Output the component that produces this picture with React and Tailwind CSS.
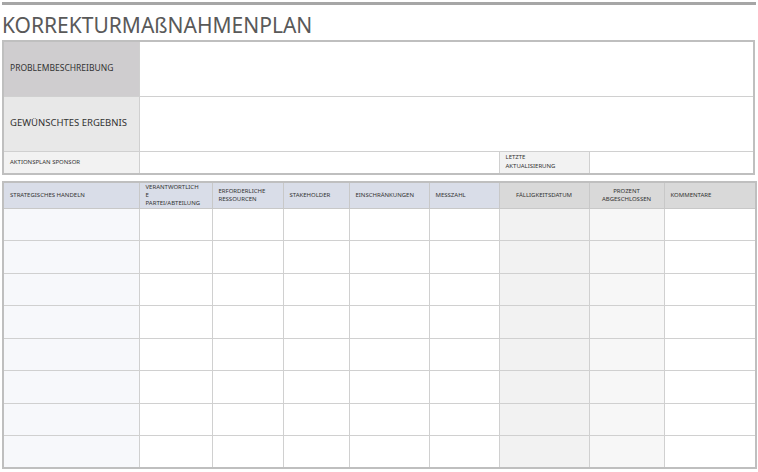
export default function App() {
  const cols = [
    { w: 136, label: ['STRATEGISCHES HANDELN'], head: 'bg-[#d9dde8]', body: 'bg-[#f7f8fb]', align: 'text-left' },
    { w: 73, label: ['VERANTWORTLICH', 'E', 'PARTEI/ABTEILUNG'], head: 'bg-[#d9dde8]', body: 'bg-white', align: 'text-left' },
    { w: 71, label: ['ERFORDERLICHE', 'RESSOURCEN'], head: 'bg-[#d9dde8]', body: 'bg-white', align: 'text-left' },
    { w: 66, label: ['STAKEHOLDER'], head: 'bg-[#d9dde8]', body: 'bg-white', align: 'text-left' },
    { w: 80, label: ['EINSCHRÄNKUNGEN'], head: 'bg-[#d9dde8]', body: 'bg-white', align: 'text-left' },
    { w: 70, label: ['MESSZAHL'], head: 'bg-[#d9dde8]', body: 'bg-white', align: 'text-left' },
    { w: 90, label: ['FÄLLIGKEITSDATUM'], head: 'bg-[#d9d9d9]', body: 'bg-[#f2f2f2]', align: 'text-center' },
    { w: 75, label: ['PROZENT', 'ABGESCHLOSSEN'], head: 'bg-[#d9d9d9]', body: 'bg-[#f7f7f7]', align: 'text-center' },
    { w: 92, label: ['KOMMENTARE'], head: 'bg-[#d9d9d9]', body: 'bg-white', align: 'text-left' },
  ];
  const rows = [0, 1, 2, 3, 4, 5, 6, 7];
  const serif = "font-[family-name:'DejaVu_Serif',serif]";

  return (
    <div className={`w-[758px] h-[472px] bg-white ${serif} text-[#333] overflow-hidden`}>
      <div className="h-[3px] bg-[#a6a6a6] mt-[2px] mx-[2px]" />
      <div className="px-[2px] pt-[8px] h-[35px] text-[21px] leading-[24px] text-[#595959] font-[family-name:'Liberation_Serif',serif]">
        KORREKTURMAßNAHMENPLAN
      </div>
      <table className="ml-[2px] w-[753px] table-fixed border-collapse border-2 border-[#bfbfbf]">
        <colgroup>
          <col className="w-[136px]" />
          <col className="w-[360px]" />
          <col className="w-[90px]" />
          <col />
        </colgroup>
        <tbody>
          <tr className="h-[55px]">
            <td className="bg-[#cfcdcf] border border-[#d0d0d0] px-[6px] text-[8.5px]">PROBLEMBESCHREIBUNG</td>
            <td colSpan={3} className="border border-[#d0d0d0]" />
          </tr>
          <tr className="h-[55px]">
            <td className="bg-[#e8e8e8] border border-[#d0d0d0] px-[6px] text-[9.5px] font-[family-name:'Open_Sans',sans-serif]">GEWÜNSCHTES ERGEBNIS</td>
            <td colSpan={3} className="border border-[#d0d0d0]" />
          </tr>
          <tr className="h-[23px]">
            <td className="bg-[#f2f2f2] border border-[#d0d0d0] px-[6px] text-[6px]">AKTIONSPLAN SPONSOR</td>
            <td className="border border-[#d0d0d0]" />
            <td className="bg-[#f2f2f2] border border-[#d0d0d0] px-[6px] text-[6px] leading-[9px]">LETZTE<br />AKTUALISIERUNG</td>
            <td className="border border-[#d0d0d0]" />
          </tr>
        </tbody>
      </table>
      <table className="ml-[2px] mt-[6px] w-[753px] table-fixed border-collapse border-2 border-[#bfbfbf]">
        <colgroup>
          {cols.map((c, i) => (
            <col key={i} style={{ width: c.w }} />
          ))}
        </colgroup>
        <thead>
          <tr className="h-[26px]">
            {cols.map((c, i) => (
              <th key={i} className={`${c.head} ${c.align} border border-[#c8c8c8] px-[6px] py-0 text-[6px] leading-[8px] font-normal whitespace-nowrap overflow-hidden`}>
                {c.label.map((l, j) => (
                  <div key={j}>{l}</div>
                ))}
              </th>
            ))}
          </tr>
        </thead>
        <tbody>
          {rows.map((r) => (
            <tr key={r} className="h-[32.5px]">
              {cols.map((c, i) => (
                <td key={i} className={`${c.body} border border-[#d0d0d0] p-0`} />
              ))}
            </tr>
          ))}
        </tbody>
      </table>
    </div>
  );
}
